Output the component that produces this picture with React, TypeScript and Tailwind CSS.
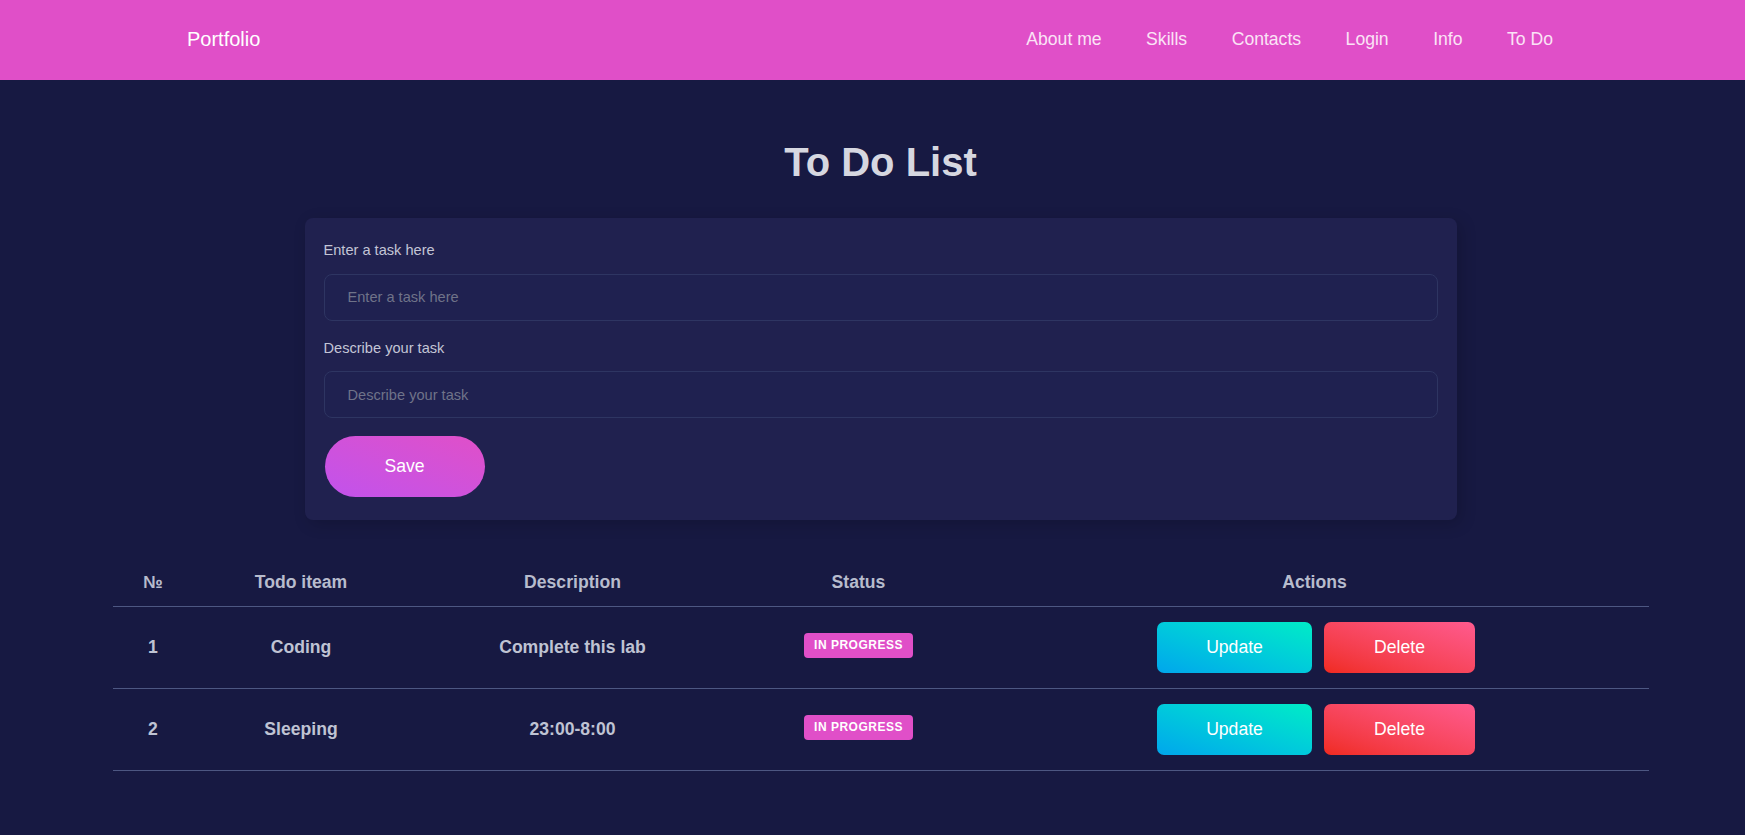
import React from "react";

const links = ["About me", "Skills", "Contacts", "Login", "Info", "To Do"];

const todos = [
  { id: 1, title: "Coding", description: "Complete this lab", status: "In progress" },
  { id: 2, title: "Sleeping", description: "23:00-8:00", status: "In progress" },
];

const Navbar = () => (
  <nav className="h-[80px] bg-[#e04fc8] flex items-center justify-between pl-[187px] pr-[192px]">
    <a className="text-[20px] text-white leading-none -mt-[2px]">Portfolio</a>
    <ul className="flex items-center gap-[44.5px]">
      {links.map((l) => (
        <li key={l} className="text-[17.6px] text-[#fbe3f6] leading-none">
          {l}
        </li>
      ))}
    </ul>
  </nav>
);

const TodoForm = () => (
  <form className="w-[1152px] mx-auto bg-[#20214f] rounded-[8px] shadow-[4px_4px_16px_rgba(0,0,0,0.18)] pt-[24px] px-[19px] pb-[23px]">
    <label className="block text-[14.6px] leading-[17.5px] text-[#c3c5d6] mb-[14px]">Enter a task here</label>
    <input
      placeholder="Enter a task here"
      className="block w-full h-[47px] rounded-[8px] border border-[#2e3562] bg-[#1f2150] px-[23px] text-[14.6px] text-[#c3c5d6] placeholder:text-[#6f7389] outline-none mb-[19px]"
    />
    <label className="block text-[14.6px] leading-[17.5px] text-[#c3c5d6] mb-[14px]">Describe your task</label>
    <input
      placeholder="Describe your task"
      className="block w-full h-[47px] rounded-[8px] border border-[#2e3562] bg-[#1f2150] px-[23px] text-[14.6px] text-[#c3c5d6] placeholder:text-[#6f7389] outline-none mb-[18px]"
    />
    <button
      type="button"
      className="ml-px w-[160px] h-[61px] rounded-full bg-gradient-to-tr from-[#c152ec] to-[#e04fc8] text-white text-[17.6px]"
    >
      Save
    </button>
  </form>
);

const TodoTable = () => (
  <table className="w-[1536px] mx-auto mt-[38px] border-collapse table-fixed">
    <thead>
      <tr className="border-b border-[#4d5782]">
        <th className="w-[81px] h-[48px] text-[17.6px] font-bold text-[#b7bccd]">№</th>
        <th className="w-[215px] text-[17.6px] font-bold text-[#b7bccd]">Todo iteam</th>
        <th className="w-[328px] text-[17.6px] font-bold text-[#b7bccd]">Description</th>
        <th className="w-[244px] text-[17.6px] font-bold text-[#b7bccd]">Status</th>
        <th className="text-[17.6px] font-bold text-[#b7bccd]">Actions</th>
      </tr>
    </thead>
    <tbody>
      {todos.map((t) => (
        <tr key={t.id} className="border-b border-[#4d5782]">
          <td className="h-[82px] text-center text-[17.6px] font-bold text-[#bfc3d3]">{t.id}</td>
          <td className="text-center text-[17.6px] font-bold text-[#bfc3d3]">{t.title}</td>
          <td className="text-center text-[17.6px] font-bold text-[#bfc3d3]">{t.description}</td>
          <td className="text-center">
            <span className="inline-flex items-center h-[25px] px-[10px] rounded-[4px] bg-[#e04fc8] text-white text-[12px] font-bold uppercase tracking-[0.5px] -translate-y-[2px]">
              {t.status}
            </span>
          </td>
          <td>
            <div className="flex justify-center gap-[12px] pl-[3px]">
              <button className="w-[155px] h-[51px] rounded-[7px] bg-gradient-to-tr from-[#00a6ec] to-[#00ecc6] text-white text-[17.6px]">
                Update
              </button>
              <button className="w-[151px] h-[51px] rounded-[7px] bg-gradient-to-tr from-[#f02a1e] to-[#ff5a8e] text-white text-[17.6px]">
                Delete
              </button>
            </div>
          </td>
        </tr>
      ))}
    </tbody>
  </table>
);

export default function App() {
  return (
    <div className="min-h-[835px] bg-[#171942] font-['Liberation_Sans',Arial,sans-serif]">
      <Navbar />
      <main className="pl-[16px] pb-10">
        <h1 className="text-center text-[40px] font-bold text-[#d6d7e0] leading-[46px] pt-[59px] mb-[33px]">To Do List</h1>
        <TodoForm />
        <TodoTable />
      </main>
    </div>
  );
}
